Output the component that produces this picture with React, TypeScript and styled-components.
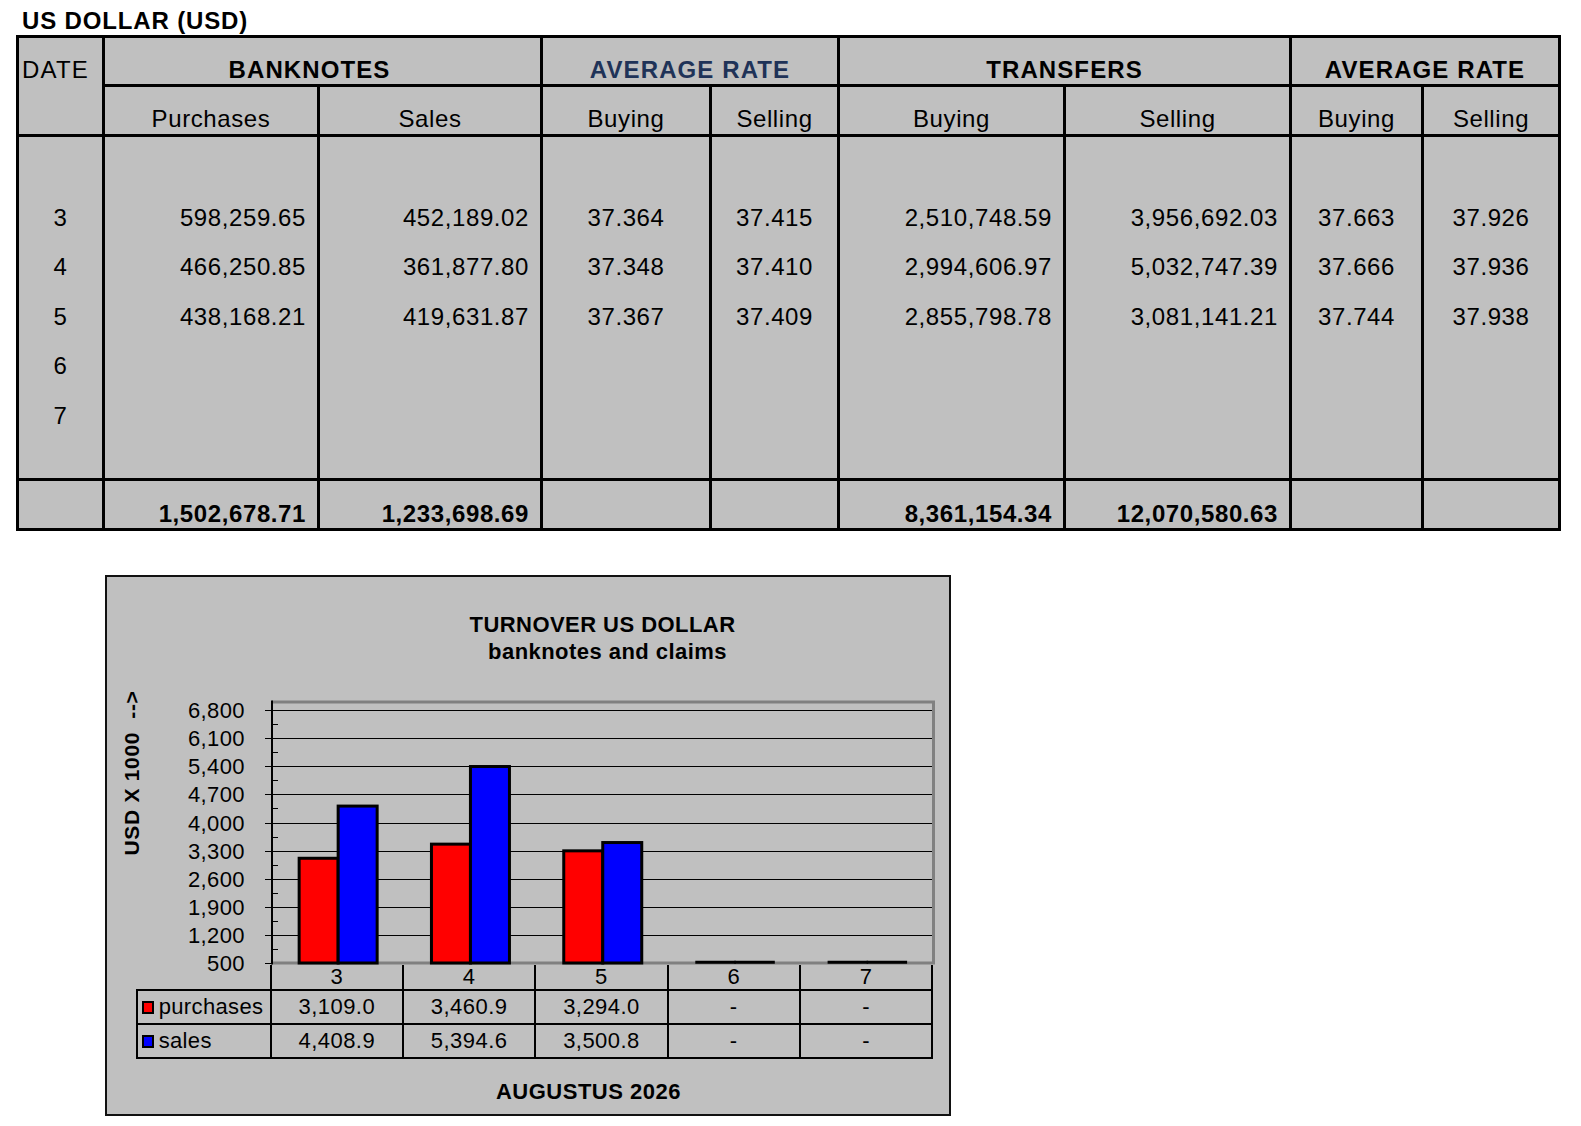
import React from 'react';
import styled, { createGlobalStyle } from 'styled-components';

type Align = 'center' | 'right';

interface RateColumn {
  sub: string;
  align: Align;
  values: string[];
  total: string;
}

interface GroupHeader {
  label: string;
  navy?: boolean;
  shift?: number;
}

const GlobalStyle = createGlobalStyle`
  html, body {
    margin: 0;
    padding: 0;
    background: #fff;
  }
  body {
    font-family: "Liberation Sans", Arial, sans-serif;
    color: #000;
  }
`;

const Page = styled.div`
  padding: 0 0 10px 16px;
`;

const Heading = styled.h1`
  margin: 0;
  height: 35px;
  box-sizing: border-box;
  padding: 7px 0 0 6px;
  font-size: 24px;
  line-height: 28px;
  font-weight: bold;
  letter-spacing: 0.85px;
`;

/* ---------- rate table ---------- */

const RateGrid = styled.div`
  display: grid;
  width: 1545px;
  box-sizing: border-box;
  grid-template-columns: 83px 212px 220px 166px 125px 223px 223px 129px 134px;
  grid-template-rows: 46px 47px 341px 47px;
  gap: 3px;
  padding: 3px;
  background: #000;
  font-size: 24px;
  letter-spacing: 0.6px;
`;

const DateHead = styled.div`
  grid-row: span 2;
  background: #c0c0c0;
  padding: 20px 0 0 3px;
  line-height: 24px;
  letter-spacing: 1.2px;
`;

const GroupHead = styled.div<{ $navy?: boolean; $shift: number }>`
  grid-column: span 2;
  background: #c0c0c0;
  padding: 20px ${(props) => props.$shift}px 0 0;
  line-height: 24px;
  font-weight: bold;
  letter-spacing: 1.1px;
  text-align: center;
  color: ${(props) => (props.$navy ? '#1f3358' : '#000')};
`;

const SubHead = styled.div`
  background: #c0c0c0;
  padding-top: 20px;
  line-height: 24px;
  text-align: center;
`;

const BodyCol = styled.div<{ $align: Align }>`
  background: #c0c0c0;
  padding: 56px ${(props) => (props.$align === 'right' ? '11px' : '0')} 0 0;
  text-align: ${(props) => props.$align};
`;

const BodyLine = styled.div`
  height: 49.4px;
  line-height: 49.4px;
`;

const TotalCell = styled.div`
  background: #c0c0c0;
  padding: 21px 11px 0 0;
  line-height: 24px;
  text-align: right;
  font-weight: bold;
`;

/* ---------- chart ---------- */

const ChartFrame = styled.div`
  margin: 44px 0 0 89px;
  width: 846px;
  height: 541px;
  box-sizing: border-box;
  border: 2px solid #111;
  background: #c0c0c0;
  display: flex;
  flex-direction: column;
`;

const ChartTitle = styled.div`
  margin-left: 165px;
  width: 661px;
  padding-top: 34px;
  text-align: center;
  font-size: 22px;
  line-height: 27px;
  font-weight: bold;
  letter-spacing: 0.45px;
`;

const TitleLine = styled.div<{ $shift?: number }>`
  padding-left: ${(props) => props.$shift || 0}px;
`;

const PlotSvg = styled.svg`
  display: block;
  margin-top: 15px;
  flex-shrink: 0;
  overflow: visible;
`;

const TickLabel = styled.text`
  font-family: "Liberation Sans", Arial, sans-serif;
  font-size: 22px;
  letter-spacing: 0.4px;
  fill: #000;
`;

const AxisTitle = styled.text`
  font-family: "Liberation Sans", Arial, sans-serif;
  font-size: 21px;
  font-weight: bold;
  letter-spacing: 0.7px;
  white-space: pre;
  fill: #000;
`;

const DataGrid = styled.div`
  display: grid;
  grid-template-columns: 136px repeat(5, 132.3px);
  grid-template-rows: 26px 34px 34px;
  margin-left: 28.7px;
  width: max-content;
  font-size: 22px;
  letter-spacing: 0.45px;
`;

const Corner = styled.div`
  border-right: 2px solid #000;
  border-bottom: 2px solid #000;
`;

const DataCell = styled.div`
  border-right: 2px solid #000;
  border-bottom: 2px solid #000;
  display: flex;
  align-items: center;
  justify-content: center;
  line-height: 22px;
`;

const LegendCell = styled.div`
  border-left: 2px solid #000;
  border-right: 2px solid #000;
  border-bottom: 2px solid #000;
  display: flex;
  align-items: center;
  padding-left: 4px;
  line-height: 22px;
  letter-spacing: 0.35px;
`;

const LegendKey = styled.span<{ $color: string }>`
  display: inline-block;
  width: 8px;
  height: 9px;
  border: 2px solid #000;
  background: ${(props) => props.$color};
  margin-right: 5px;
`;

const ChartFooter = styled.div`
  margin-top: 18.5px;
  padding-left: 121px;
  text-align: center;
  font-size: 22px;
  line-height: 27px;
  font-weight: bold;
  letter-spacing: 0.5px;
`;

const groups: GroupHeader[] = [
  { label: 'BANKNOTES', shift: 26 },
  { label: 'AVERAGE RATE', navy: true },
  { label: 'TRANSFERS' },
  { label: 'AVERAGE RATE' },
];

const dateColumn: RateColumn = {
  sub: '',
  align: 'center',
  values: ['3', '4', '5', '6', '7'],
  total: '',
};

const rateColumns: RateColumn[] = [
  {
    sub: 'Purchases',
    align: 'right',
    values: ['598,259.65', '466,250.85', '438,168.21'],
    total: '1,502,678.71',
  },
  {
    sub: 'Sales',
    align: 'right',
    values: ['452,189.02', '361,877.80', '419,631.87'],
    total: '1,233,698.69',
  },
  { sub: 'Buying', align: 'center', values: ['37.364', '37.348', '37.367'], total: '' },
  { sub: 'Selling', align: 'center', values: ['37.415', '37.410', '37.409'], total: '' },
  {
    sub: 'Buying',
    align: 'right',
    values: ['2,510,748.59', '2,994,606.97', '2,855,798.78'],
    total: '8,361,154.34',
  },
  {
    sub: 'Selling',
    align: 'right',
    values: ['3,956,692.03', '5,032,747.39', '3,081,141.21'],
    total: '12,070,580.63',
  },
  { sub: 'Buying', align: 'center', values: ['37.663', '37.666', '37.744'], total: '' },
  { sub: 'Selling', align: 'center', values: ['37.926', '37.936', '37.938'], total: '' },
];

const categories = ['3', '4', '5', '6', '7'];
const purchases = [3109.0, 3460.9, 3294.0, 0, 0];
const sales = [4408.9, 5394.6, 3500.8, 0, 0];

const PLOT = {
  left: 165,
  right: 826.5,
  base: 283,
  min: 500,
  max: 7000,
  step: 700,
  pxPerUnit: 28.1 / 700,
};

function yOf(v: number) {
  return PLOT.base - (Math.max(v, PLOT.min) - PLOT.min) * PLOT.pxPerUnit;
}

function crisp(y: number) {
  return Math.round(y) + 0.5;
}

function formatValue(v: number) {
  if (!v) return '-';
  return v.toLocaleString('en-US', { minimumFractionDigits: 1, maximumFractionDigits: 1 });
}

function BarChart() {
  const band = (PLOT.right - PLOT.left) / categories.length;
  const top = yOf(PLOT.max);
  const majors: number[] = [];
  for (let v = PLOT.min; v <= 6800; v += PLOT.step) majors.push(v);
  const minors = majors.map((v) => v + PLOT.step / 2).filter((v) => v < PLOT.max);

  return (
    <PlotSvg width={842} height={285} viewBox="0 0 842 285">
      <AxisTitle transform="translate(32 93) rotate(-90)" textAnchor="middle">
        {'USD X 1000  -->'}
      </AxisTitle>

      {majors.map((v) => (
        <TickLabel key={`l${v}`} x={138} y={yOf(v) + 8} textAnchor="end">
          {v.toLocaleString('en-US')}
        </TickLabel>
      ))}

      {majors
        .filter((v) => v > PLOT.min)
        .map((v) => (
          <line
            key={`g${v}`}
            x1={PLOT.left}
            x2={PLOT.right}
            y1={crisp(yOf(v))}
            y2={crisp(yOf(v))}
            stroke="#000"
            strokeWidth={1}
          />
        ))}

      <polyline
        points={`${PLOT.left},${top} ${PLOT.right},${top} ${PLOT.right},${PLOT.base} ${PLOT.left},${PLOT.base}`}
        fill="none"
        stroke="#808080"
        strokeWidth={3}
      />
      <line x1={PLOT.left} x2={PLOT.left} y1={top - 1.5} y2={PLOT.base + 1.5} stroke="#000" strokeWidth={2} />

      {majors.map((v) => (
        <line
          key={`t${v}`}
          x1={PLOT.left - 7}
          x2={PLOT.left}
          y1={crisp(yOf(v))}
          y2={crisp(yOf(v))}
          stroke="#000"
          strokeWidth={1}
        />
      ))}
      {minors.map((v) => (
        <line
          key={`m${v}`}
          x1={PLOT.left}
          x2={PLOT.left + 6}
          y1={crisp(yOf(v))}
          y2={crisp(yOf(v))}
          stroke="#000"
          strokeWidth={1}
        />
      ))}

      {categories.map((c, i) => {
        const cx = PLOT.left + band * (i + 0.5);
        const pTop = purchases[i] ? yOf(purchases[i]) : PLOT.base - 1.5;
        const sTop = sales[i] ? yOf(sales[i]) : PLOT.base - 1.5;
        return (
          <g key={c}>
            <rect
              x={cx - 39}
              y={pTop}
              width={39}
              height={PLOT.base - pTop}
              fill="#ff0000"
              stroke="#000"
              strokeWidth={purchases[i] ? 3 : 1.5}
            />
            <rect
              x={cx}
              y={sTop}
              width={39}
              height={PLOT.base - sTop}
              fill="#0000ff"
              stroke="#000"
              strokeWidth={sales[i] ? 3 : 1.5}
            />
          </g>
        );
      })}
    </PlotSvg>
  );
}

export default function App() {
  const allColumns = [dateColumn, ...rateColumns];
  return (
    <Page>
      <GlobalStyle />
      <Heading>US DOLLAR (USD)</Heading>

      <RateGrid>
        <DateHead>DATE</DateHead>
        {groups.map((g, i) => (
          <GroupHead key={`${g.label}${i}`} $navy={g.navy} $shift={g.shift || 0}>
            {g.label}
          </GroupHead>
        ))}
        {rateColumns.map((col, i) => (
          <SubHead key={`s${i}`}>{col.sub}</SubHead>
        ))}
        {allColumns.map((col, i) => (
          <BodyCol key={`b${i}`} $align={col.align}>
            {col.values.map((v, j) => (
              <BodyLine key={j}>{v}</BodyLine>
            ))}
          </BodyCol>
        ))}
        {allColumns.map((col, i) => (
          <TotalCell key={`t${i}`}>{col.total}</TotalCell>
        ))}
      </RateGrid>

      <ChartFrame>
        <ChartTitle>
          <TitleLine>TURNOVER US DOLLAR</TitleLine>
          <TitleLine $shift={10}>banknotes and claims</TitleLine>
        </ChartTitle>
        <BarChart />
        <DataGrid>
          <Corner />
          {categories.map((c) => (
            <DataCell key={`c${c}`}>{c}</DataCell>
          ))}
          <LegendCell>
            <LegendKey $color="#ff0000" />
            purchases
          </LegendCell>
          {purchases.map((v, i) => (
            <DataCell key={`p${i}`}>{formatValue(v)}</DataCell>
          ))}
          <LegendCell>
            <LegendKey $color="#0000ff" />
            sales
          </LegendCell>
          {sales.map((v, i) => (
            <DataCell key={`v${i}`}>{formatValue(v)}</DataCell>
          ))}
        </DataGrid>
        <ChartFooter>AUGUSTUS 2026</ChartFooter>
      </ChartFrame>
    </Page>
  );
}
